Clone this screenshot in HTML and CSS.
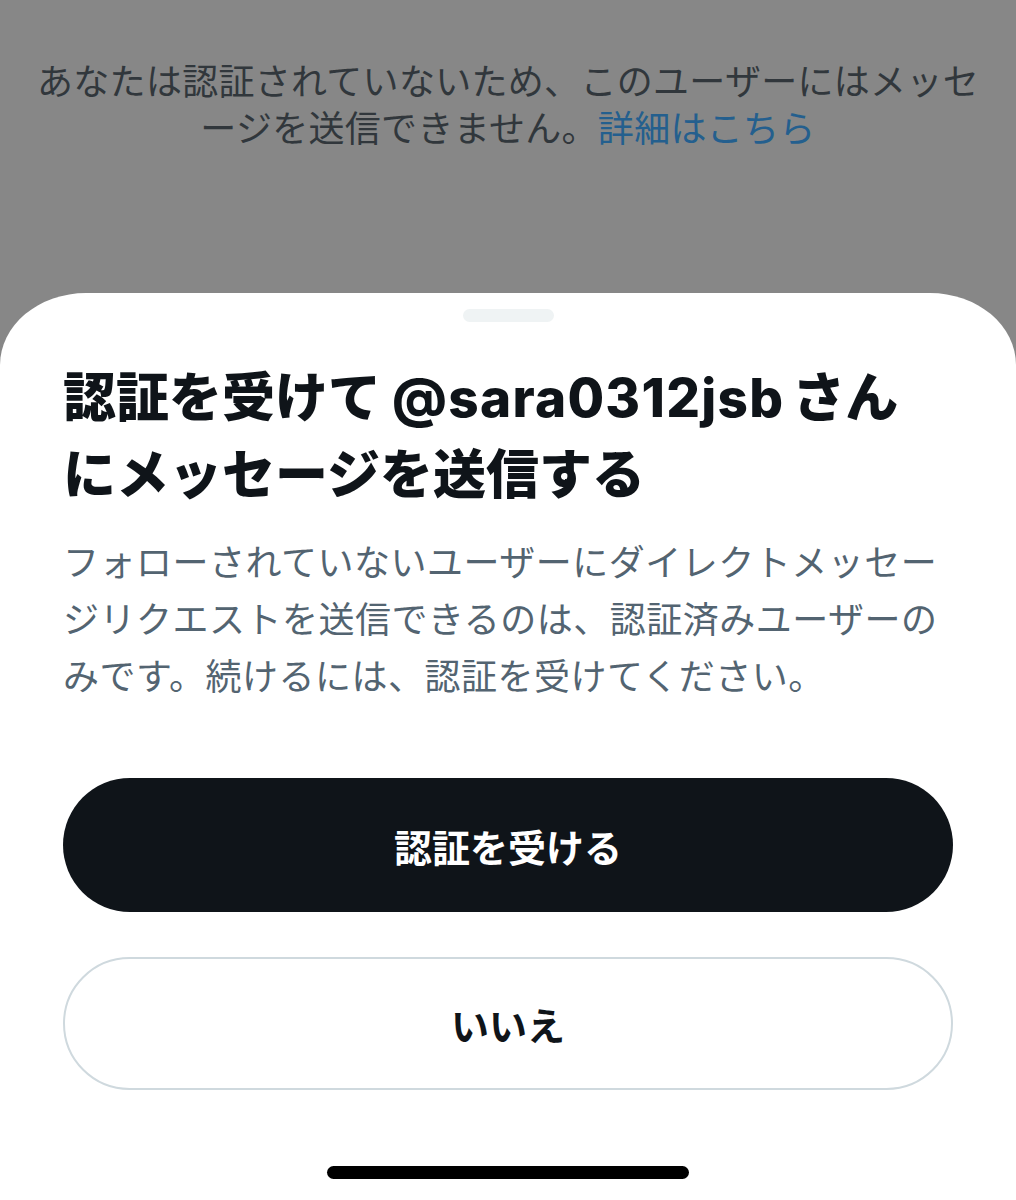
FILE: index.html
```html
<!DOCTYPE html>
<html lang="ja">
<head>
<meta charset="utf-8">
<title>認証を受ける</title>
<link rel="stylesheet" href="styles.css">
</head>
<body>
<div class="screen">
  <div class="backdrop">
    <p class="notice">あなたは認証されていないため、このユーザーにはメッセ<br>ージを送信できません。<span class="link">詳細はこちら</span></p>
  </div>
  <div class="sheet">
    <div class="handle"></div>
    <h1 class="title">認証を受けて<span class="latin">@sara0312jsb</span>さん<br>にメッセージを送信する</h1>
    <p class="desc">フォローされていないユーザーにダイレクトメッセー<br>ジリクエストを送信できるのは、認証済みユーザーの<br>みです。続けるには、認証を受けてください。</p>
    <div class="actions">
      <button class="btn btn-primary">認証を受ける</button>
      <button class="btn btn-secondary">いいえ</button>
    </div>
    <div class="home-indicator"></div>
  </div>
</div>
</body>
</html>
```
FILE: styles.css
```css
* { box-sizing: border-box; }
html, body {
  margin: 0;
  padding: 0;
  background: #878787;
}
body {
  font-family: "Inter", "Noto Sans CJK JP", "Noto Sans", sans-serif;
}
.screen {
  width: 1016px;
  height: 1200px;
  display: flex;
  flex-direction: column;
  overflow: hidden;
}
.backdrop {
  height: 293px;
  flex: none;
  padding: 56px 30px 0;
}
.notice {
  margin: 0;
  text-align: center;
  font-family: "Noto Sans CJK JP", sans-serif;
  font-size: 36px;
  letter-spacing: 0.3px;
  line-height: 47px;
  color: #31373c;
  white-space: nowrap;
}
.link {
  color: #245f8e;
}
.sheet {
  flex: 1;
  background: #ffffff;
  border-radius: 86px 86px 0 0 / 72px 72px 0 0;
  padding: 0 63px;
  display: flex;
  flex-direction: column;
}
.handle {
  width: 91px;
  height: 13px;
  border-radius: 7px;
  background: #eff3f4;
  margin: 16px auto 0;
}
.title {
  margin: 38px 0 0 0;
  font-size: 53px;
  line-height: 77px;
  font-weight: 900;
  color: #0f1419;
  white-space: nowrap;
}
.latin {
  font-family: "Inter", sans-serif;
  font-weight: 800;
  letter-spacing: 1.3px;
  margin: 0 8px 0 11px;
}
.desc {
  margin: 18px 0 0 0;
  font-family: "Noto Sans CJK JP", sans-serif;
  font-size: 36px;
  letter-spacing: 0.5px;
  line-height: 57px;
  color: #536471;
  white-space: nowrap;
}
.actions {
  margin-top: 75px;
  display: flex;
  flex-direction: column;
  gap: 45px;
}
.btn {
  width: 890px;
  border-radius: 999px;
  font-family: "Noto Sans CJK JP", sans-serif;
  font-size: 38px;
  font-weight: 700;
  cursor: pointer;
  padding: 0;
}
.btn-primary {
  height: 134px;
  background: #0f1419;
  color: #ffffff;
  border: none;
}
.btn-secondary {
  height: 133px;
  background: #ffffff;
  color: #0f1419;
  border: 2px solid #cfd9de;
}
.home-indicator {
  width: 362px;
  height: 13px;
  border-radius: 7px;
  background: #000000;
  margin: 76px auto 0;
}
```
